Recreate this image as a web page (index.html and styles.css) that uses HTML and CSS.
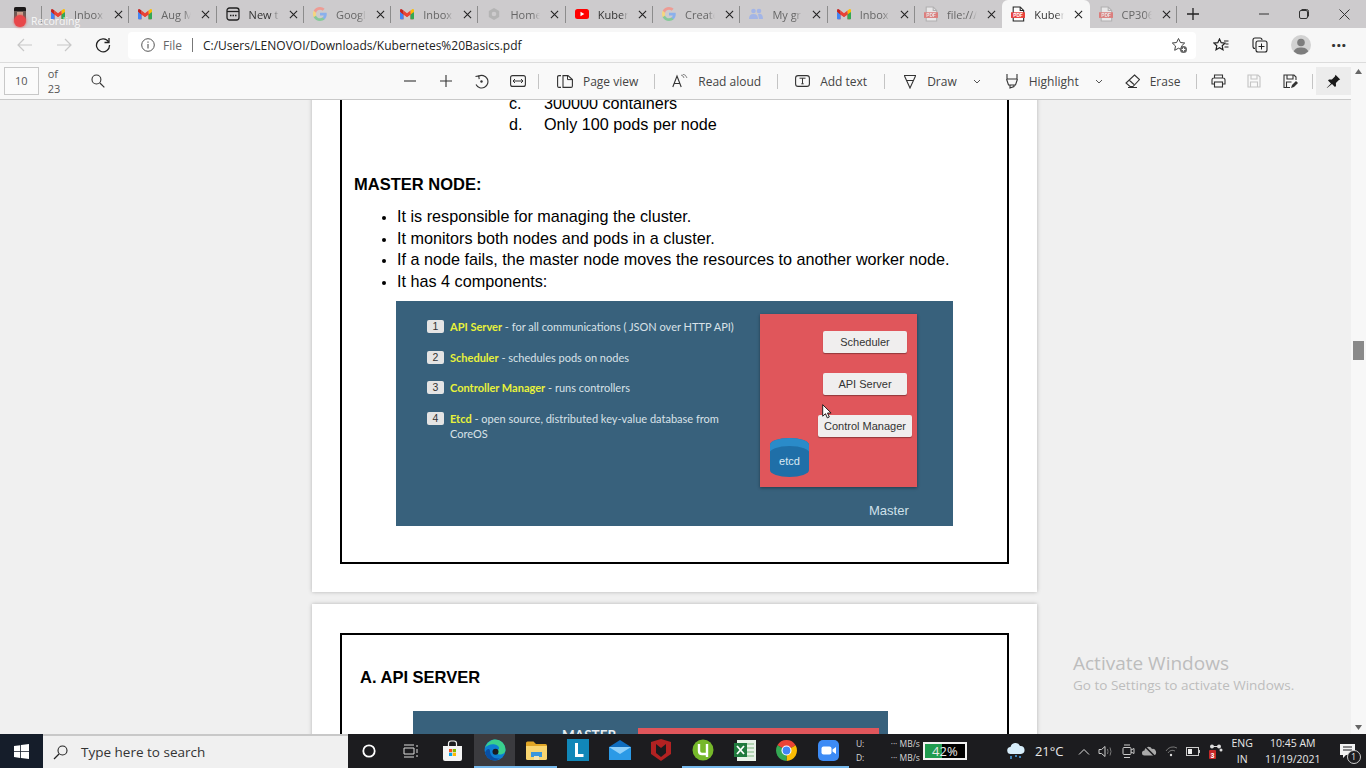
FILE: index.html
```html
<!DOCTYPE html>
<html>
<head>
  <title>Kubernetes Basics.pdf</title>
  <link rel="stylesheet" href="styles.css">
</head>
<body>

  <svg class="defs" width="0" height="0">
    <symbol id="gmail" viewBox="0 0 16 12">
      <path d="M1 12V3l7 5 7-5v9h-3V6.500L8 9.500 4 6.500V12z" fill="#ea4335"/>
      <path d="M1 12h3V6.500L0 3.500V11q0 1 1 1z" fill="#4285f4"/>
      <path d="M12 12h3q1 0 1-1V3.500l-4 3z" fill="#34a853"/>
      <path d="M12 6.500l4-3V2q0-2-2-1.500L12 2z" fill="#fbbc04"/>
      <path d="M4 6.500L8 9.500l4-3V2L8 5 4 2z" fill="#ea4335"/>
      <path d="M0 3.500l4 3V2L2 .500Q0 0 0 2z" fill="#c5221f"/>
    </symbol>
    <symbol id="google" viewBox="0 0 16 16">
      <path d="M15.700 8.200c0-.6-.1-1.100-.2-1.600H8v3h4.300c-.2 1-.8 1.800-1.600 2.400v2h2.600c1.500-1.400 2.400-3.400 2.400-5.800z" fill="#8ab0ec"/>
      <path d="M8 16c2.200 0 4-.7 5.300-1.900l-2.600-2c-.7.500-1.600.8-2.700.8-2.100 0-3.900-1.400-4.500-3.300H.8v2.100C2.100 14.300 4.800 16 8 16z" fill="#86c99a"/>
      <path d="M3.500 9.600c-.3-1-.3-2.100 0-3.100V4.400H.8c-1.100 2.200-1.100 5 0 7.200z" fill="#f5d67f"/>
      <path d="M8 3.200c1.200 0 2.200.4 3 1.200l2.300-2.300C11.900.8 10.100 0 8 0 4.800 0 2.100 1.800.8 4.400l2.700 2.100C4.100 4.600 5.900 3.200 8 3.200z" fill="#ee9c94"/>
    </symbol>
    <symbol id="pdf" viewBox="0 0 16 18">
      <path d="M2.500 1h8l4 4v12h-12z" fill="#fff" stroke="currentColor" stroke-width="1.200"/>
      <path d="M10.500 1v4h4" fill="none" stroke="currentColor" stroke-width="1.200"/>
      <rect x="0" y="7" width="16" height="6.500" fill="#e8413c"/>
      <text x="8" y="12.300" font-size="5.500" font-weight="700" text-anchor="middle" fill="#fff" font-family="Liberation Sans">PDF</text>
    </symbol>
    <symbol id="close" viewBox="0 0 10 10">
      <path d="M1 1l8 8M9 1l-8 8" stroke="#222" stroke-width="1.200" fill="none"/>
    </symbol>
    <symbol id="chev" viewBox="0 0 8 5">
      <path d="M1 1l3 3 3-3" stroke="#555" stroke-width="1" fill="none"/>
    </symbol>
  </svg>

  <!-- Tabs -->
  <div class="tabstrip">
    <div class="tab-first">
      <svg width="14" height="16" viewBox="0 0 14 16"><rect x="1" y="1" width="12" height="14" rx="2" fill="#6b5b55"/><path d="M1 5V3q0-2 2-2h8q2 0 2 2v2z" fill="#1c1a1a"/><rect x="4" y="6" width="6" height="6" fill="#c9a38e"/></svg>
    </div>
    <div class="tab"><svg class="fav"><use href="#gmail"/></svg><span class="tab-name">Inbox</span><svg class="tab-x"><use href="#close"/></svg></div>
    <div class="tab"><svg class="fav"><use href="#gmail"/></svg><span class="tab-name">Aug M</span><svg class="tab-x"><use href="#close"/></svg></div>
    <div class="tab">
      <svg class="fav" viewBox="0 0 14 14"><rect x="1" y="1" width="12" height="12" rx="2.500" fill="none" stroke="#222" stroke-width="1.300"/><path d="M1 4.500h12" stroke="#222" stroke-width="1.300"/><path d="M4 8.500h1.500M6.500 8.500H8M9 8.500h1.500" stroke="#222" stroke-width="1.300"/></svg>
      <span class="tab-name tab-dark">New t</span><svg class="tab-x"><use href="#close"/></svg>
    </div>
    <div class="tab"><svg class="fav"><use href="#google"/></svg><span class="tab-name">Googl</span><svg class="tab-x"><use href="#close"/></svg></div>
    <div class="tab"><svg class="fav"><use href="#gmail"/></svg><span class="tab-name">Inbox</span><svg class="tab-x"><use href="#close"/></svg></div>
    <div class="tab">
      <svg class="fav" viewBox="0 0 14 14"><path d="M7 1l5.200 3v6L7 13l-5.200-3V4z" fill="#b4b4b4"/><circle cx="7" cy="7" r="2.300" fill="#cdcbcd"/></svg>
      <span class="tab-name">Home</span><svg class="tab-x"><use href="#close"/></svg>
    </div>
    <div class="tab">
      <svg class="fav" viewBox="0 0 14 10"><rect width="14" height="10" rx="2.500" fill="#f00"/><path d="M5.500 2.800v4.400L9.300 5z" fill="#fff"/></svg>
      <span class="tab-name tab-dark">Kuber</span><svg class="tab-x"><use href="#close"/></svg>
    </div>
    <div class="tab"><svg class="fav"><use href="#google"/></svg><span class="tab-name">Create</span><svg class="tab-x"><use href="#close"/></svg></div>
    <div class="tab">
      <svg class="fav" viewBox="0 0 14 12"><circle cx="4.500" cy="3" r="2.300" fill="#a3b5e6"/><circle cx="10" cy="3" r="2.300" fill="#a3b5e6"/><path d="M0 11q0-5 4.500-5T9 11zM9 6q5-1 5 5h-4z" fill="#a3b5e6"/></svg>
      <span class="tab-name">My gr</span><svg class="tab-x"><use href="#close"/></svg>
    </div>
    <div class="tab"><svg class="fav"><use href="#gmail"/></svg><span class="tab-name">Inbox</span><svg class="tab-x"><use href="#close"/></svg></div>
    <div class="tab tab-before-active"><svg class="fav-pdf fav-dim"><use href="#pdf"/></svg><span class="tab-name">file:///</span><svg class="tab-x"><use href="#close"/></svg></div>
    <div class="tab tab-active"><svg class="fav-pdf"><use href="#pdf"/></svg><span class="tab-name tab-dark">Kuber</span><svg class="tab-x"><use href="#close"/></svg></div>
    <div class="tab"><svg class="fav-pdf fav-dim"><use href="#pdf"/></svg><span class="tab-name">CP306</span><svg class="tab-x"><use href="#close"/></svg></div>
    <svg class="tab-plus" width="14" height="14" viewBox="0 0 14 14"><path d="M7 1v12M1 7h12" stroke="#222" stroke-width="1.300"/></svg>
    <div class="win-controls">
      <svg width="10" height="10" viewBox="0 0 10 10"><path d="M0 5h10" stroke="#333"/></svg>
      <svg width="10" height="10" viewBox="0 0 10 10"><rect x=".500" y="1.500" width="8" height="8" rx="1.500" fill="none" stroke="#333"/><path d="M2.500 .500h5q2 0 2 2v5" fill="none" stroke="#333"/></svg>
      <svg width="11" height="11" viewBox="0 0 11 11"><path d="M.500 .500l10 10M10.500 .500l-10 10" stroke="#333"/></svg>
    </div>
  </div>
  <div class="rec-badge"><span class="rec-dot"></span>Recording</div>

  <!-- Address row -->
  <div class="addr-row">
    <svg class="nav-ico" width="16" height="14" viewBox="0 0 16 14"><path d="M15 7H1.500M7 1L1 7l6 6" fill="none" stroke="#c8c8c8" stroke-width="1.200"/></svg>
    <svg class="nav-ico" width="16" height="14" viewBox="0 0 16 14"><path d="M1 7h13.500M9 1l6 6-6 6" fill="none" stroke="#c8c8c8" stroke-width="1.200"/></svg>
    <svg class="nav-ico" width="16" height="16" viewBox="0 0 16 16"><path d="M13.600 5A6.500 6.500 0 1 0 14.500 8" fill="none" stroke="#222" stroke-width="1.300"/><path d="M14 1v4.500H9.500" fill="none" stroke="#222" stroke-width="1.300"/></svg>
    <div class="addr-box">
      <svg width="14" height="14" viewBox="0 0 14 14"><circle cx="7" cy="7" r="6.300" fill="none" stroke="#555"/><path d="M7 6v4.500M7 3.500v1.200" stroke="#555" stroke-width="1.100"/></svg>
      <span class="addr-file">File</span>
      <span class="addr-sep"></span>
      <span class="addr-url">C:/Users/LENOVOI/Downloads/Kubernetes%20Basics.pdf</span>
      <svg class="addr-fav" width="17" height="17" viewBox="0 0 17 17"><path d="M7.500 1.500l1.900 4 4.300.5-3.200 3 .8 4.300-3.800-2.100-3.800 2.100.8-4.300-3.200-3 4.300-.5z" fill="none" stroke="#444"/><circle cx="12.500" cy="12.500" r="3.500" fill="#666"/><path d="M12.500 10.700v3.600M10.700 12.500h3.600" stroke="#fff"/></svg>
    </div>
    <svg class="bar-ico" width="16" height="15" viewBox="0 0 16 15"><path d="M6.500 1l1.700 3.700 3.800.4-2.800 2.700.8 4-3.500-2-3.500 2 .8-4L1 5.100l3.800-.4z" fill="none" stroke="#222" stroke-width="1.200"/><path d="M11 3h4.500M12.500 6h3M11.500 9h4" stroke="#222"/></svg>
    <svg class="bar-ico" width="16" height="16" viewBox="0 0 16 16"><path d="M3 11.500Q1 11.500 1 9.500V3q0-2 2-2h5q2 0 2 2" fill="none" stroke="#222" stroke-width="1.100"/><rect x="4" y="4" width="11" height="11" rx="2" fill="#f7f7f7" stroke="#222" stroke-width="1.100"/><path d="M9.500 6.500v6M6.500 9.500h6" stroke="#222"/></svg>
    <svg class="avatar" width="20" height="20" viewBox="0 0 20 20"><circle cx="10" cy="10" r="10" fill="#d2d2d2"/><circle cx="10" cy="7.500" r="3.800" fill="#7d7d7d"/><path d="M2.800 16.500C4 13 7 12.500 10 12.500s6 .5 7.200 4A10 10 0 0 1 2.800 16.500z" fill="#7d7d7d"/></svg>
    <span class="more-dots">···</span>
  </div>

  <!-- Viewer with PDF toolbar and scrollbar -->
  <div class="app-row">
    <div class="viewer-col">
      <div class="pdf-bar">
        <div class="page-input">10</div>
        <span class="page-of">of 23</span>
        <svg class="search-ico" width="14" height="14" viewBox="0 0 14 14"><circle cx="5.500" cy="5.500" r="4.500" fill="none" stroke="#333" stroke-width="1.100"/><path d="M9 9l4.500 4.500" stroke="#333" stroke-width="1.200"/></svg>

        <div class="tool tool-first"><svg width="14" height="14" viewBox="0 0 14 14"><path d="M1 7h12" stroke="#333" stroke-width="1.100"/></svg></div>
        <div class="tool"><svg width="14" height="14" viewBox="0 0 14 14"><path d="M1 7h12M7 1v12" stroke="#333" stroke-width="1.100"/></svg></div>
        <div class="tool"><svg width="15" height="15" viewBox="0 0 15 15"><path d="M4.500 2.200A6.300 6.300 0 1 1 2 10.500" fill="none" stroke="#333" stroke-width="1.100"/><path d="M1.500 2.500l3.200-.5.500 3.200" fill="none" stroke="#333" stroke-width="1.100"/><circle cx="7.500" cy="7.500" r="1.200" fill="#333"/></svg></div>
        <div class="tool"><svg width="16" height="12" viewBox="0 0 16 12"><rect x=".600" y=".600" width="14.800" height="10.800" rx="2" fill="none" stroke="#333" stroke-width="1.100"/><path d="M3 6h10M5 4L3 6l2 2M11 4l2 2-2 2" fill="none" stroke="#333"/></svg></div>
        <span class="tool-sep tool-sep-a"></span>
        <div class="tool-text tool-page">
          <svg width="16" height="13" viewBox="0 0 16 13"><path d="M4 .600H2Q.600 .600 .600 2v9q0 1.400 1.400 1.400h2M6 .600h5l4.400 4v6.400q0 1.400-1.400 1.400H6z" fill="none" stroke="#333" stroke-width="1.100"/><path d="M10.500 .600v4h4.500" fill="none" stroke="#333"/></svg>
          Page view
        </div>
        <span class="tool-sep"></span>
        <div class="tool-text tool-read">
          <svg width="16" height="14" viewBox="0 0 16 14"><path d="M.800 13L5 2l4.200 11M2.300 9.500h5.400" fill="none" stroke="#333" stroke-width="1.100"/><path d="M9 1q2.500.5 3 3M10.500 0Q14 .5 15 4" fill="none" stroke="#777" stroke-width=".9"/></svg>
          Read aloud
        </div>
        <span class="tool-sep"></span>
        <div class="tool-text tool-add">
          <svg width="15" height="12" viewBox="0 0 15 12"><rect x=".600" y=".600" width="13.800" height="10.800" rx="2.500" fill="none" stroke="#333" stroke-width="1.100"/><path d="M4.500 3.200h6M7.500 3.200v5.600M6.300 8.800h2.400" fill="none" stroke="#333"/></svg>
          Add text
        </div>
        <span class="tool-sep"></span>
        <div class="tool-text tool-draw">
          <svg width="14" height="15" viewBox="0 0 14 15"><path d="M1 1.500h12M1.500 2l5.500 12L12.500 2M3.500 6.500h7" fill="none" stroke="#333" stroke-width="1.100"/></svg>
          Draw
          <svg class="tool-chev"><use href="#chev"/></svg>
        </div>
        <div class="tool-text tool-high">
          <svg width="14" height="16" viewBox="0 0 14 16"><path d="M2 1v5h10V1M1.500 6l2 6h7l2-6M5 12v3l4-1.500V12" fill="none" stroke="#333" stroke-width="1.100"/></svg>
          Highlight
          <svg class="tool-chev"><use href="#chev"/></svg>
        </div>
        <div class="tool-text tool-erase">
          <svg width="15" height="14" viewBox="0 0 15 14"><path d="M9.500 1l5 4.500L8 12.500H5L1 9zM4 6l5 4.500M3 13.500h9" fill="none" stroke="#333" stroke-width="1.100"/></svg>
          Erase
        </div>
        <span class="tool-sep"></span>
        <div class="tool tool-print"><svg width="15" height="14" viewBox="0 0 15 14"><path d="M3.500 4V1h8v3M3.500 10H1V6q0-2 2-2h9q2 0 2 2v4h-2.500" fill="none" stroke="#333" stroke-width="1.100"/><rect x="3.500" y="8" width="8" height="5" fill="none" stroke="#333" stroke-width="1.100"/></svg></div>
        <div class="tool"><svg width="14" height="14" viewBox="0 0 14 14"><path d="M1 1h10l2 2v10H1zM4 1v4h6V1M3.500 13V8h7v5" fill="none" stroke="#c4c4c4" stroke-width="1.100"/></svg></div>
        <div class="tool"><svg width="15" height="15" viewBox="0 0 15 15"><path d="M7 13.500H1V1h10l2 2v3M4 1v4h6V1M3.500 13V8h5" fill="none" stroke="#333" stroke-width="1.100"/><path d="M8 14l1-3 4-4 2 2-4 4z" fill="#333"/></svg></div>
        <span class="tool-sep tool-sep-b"></span>
        <div class="pin-btn"><svg width="15" height="15" viewBox="0 0 15 15"><path d="M9.500 .800l4.700 4.700-1.300.6-3 3 .1 2.900-1 1-3-3L1 14l-.2-.2L5 9.500l-3-3 1-1 2.900.1 3-3z" fill="#1a1a1a"/></svg></div>
      </div>

      <div class="viewer">
        <div class="page page-top">
          <div class="frame">
            <ol class="answers">
              <li><span class="answer-key">b.</span>150000 pods</li>
              <li><span class="answer-key">c.</span>300000 containers</li>
              <li><span class="answer-key">d.</span>Only 100 pods per node</li>
            </ol>
            <h3 class="doc-head">MASTER NODE:</h3>
            <ul class="bullets">
              <li>It is responsible for managing the cluster.</li>
              <li>It monitors both nodes and pods in a cluster.</li>
              <li>If a node fails, the master node moves the resources to another worker node.</li>
              <li>It has 4 components:</li>
            </ul>
            <div class="slide">
              <div class="slide-list">
                <div class="slide-row"><span class="num">1</span><p><b>API Server</b> - for all communications ( JSON over HTTP API)</p></div>
                <div class="slide-row"><span class="num">2</span><p><b>Scheduler</b> - schedules pods on nodes</p></div>
                <div class="slide-row"><span class="num">3</span><p><b>Controller Manager</b> - runs controllers</p></div>
                <div class="slide-row"><span class="num">4</span><p><b>Etcd</b> - open source, distributed key-value database from<br>CoreOS</p></div>
              </div>
              <div class="master-box">
                <div class="comp">Scheduler</div>
                <div class="comp">API Server</div>
                <div class="comp comp-wide">Control Manager</div>
                <div class="etcd">etcd</div>
                <svg class="mouse" width="10" height="15" viewBox="0 0 10 15"><path d="M.700 .700v11.500l2.800-2.500 1.800 4.200 2-.9-1.800-4h3.600z" fill="#fff" stroke="#111" stroke-width=".9"/></svg>
              </div>
              <span class="master-label">Master</span>
            </div>
          </div>
        </div>

        <div class="page page-next">
          <div class="frame frame-next">
            <h3 class="doc-head doc-head-api">A. API SERVER</h3>
            <div class="slide-two">
              <span class="master-caps">MASTER</span>
              <div class="master-strip"></div>
            </div>
          </div>
        </div>

        <div class="activate">
          <div class="activate-big">Activate Windows</div>
          <div class="activate-small">Go to Settings to activate Windows.</div>
        </div>
      </div>
    </div>

    <div class="scrollbar">
      <svg width="7" height="5" viewBox="0 0 7 5"><path d="M3.500 0L7 5H0z" fill="#666"/></svg>
      <div class="thumb"></div>
      <svg width="7" height="5" viewBox="0 0 7 5"><path d="M3.500 5L7 0H0z" fill="#666"/></svg>
    </div>
  </div>

  <!-- Taskbar -->
  <div class="taskbar">
    <div class="start">
      <svg width="15" height="15" viewBox="0 0 15 15"><path d="M0 2.100l6.200-.9v6H0zM7 1.100L15 0v7.200H7zM0 8h6.200v6L0 13.100zM7 8h8v7l-8-1.100z" fill="#fff"/></svg>
    </div>
    <div class="search">
      <svg width="15" height="15" viewBox="0 0 15 15"><circle cx="9.500" cy="5.500" r="4.500" fill="none" stroke="#222" stroke-width="1.100"/><path d="M6 9l-5 5" stroke="#222" stroke-width="1.300"/></svg>
      <span>Type here to search</span>
    </div>
    <div class="task-sys">
      <svg width="14" height="14" viewBox="0 0 14 14"><circle cx="7" cy="7" r="5.700" fill="none" stroke="#fff" stroke-width="1.800"/></svg>
    </div>
    <div class="task-sys">
      <svg width="16" height="14" viewBox="0 0 16 14"><path d="M1 1h10M1 13h10M1 4h10v6H1zM14 1v2M14 5v4M14 11v2" fill="none" stroke="#ddd"/></svg>
    </div>

    <div class="task-app">
      <svg width="21" height="21" viewBox="0 0 21 21"><path d="M1 6h19v13q0 2-2 2H3q-2 0-2-2z" fill="#f4f4f4"/><path d="M6.500 6V3.500Q6.500 1 9 1h3q2.500 0 2.500 2.500V6" fill="none" stroke="#f4f4f4" stroke-width="1.200"/><rect x="7" y="9" width="3.200" height="3.200" fill="#f25022"/><rect x="10.800" y="9" width="3.200" height="3.200" fill="#7fba00"/><rect x="7" y="12.800" width="3.200" height="3.200" fill="#00a4ef"/><rect x="10.800" y="12.800" width="3.200" height="3.200" fill="#ffb900"/></svg>
    </div>
    <div class="task-app task-active on">
      <svg width="22" height="22" viewBox="0 0 22 22"><circle cx="11" cy="11" r="10.500" fill="#0d7ed1"/><path d="M1 9C3 2 9 .500 11 .500 17 .500 21.500 5 21.500 11c0 3-3 4.500-5.500 4.500-3 0-4.500-1.500-4-3 .5-2 3.500-1 3-4C14.500 5 5 3 1 9z" fill="#3ad08d"/><path d="M6 12c0 5 5 9 10 7-2 2-4 2.500-5 2.500-5 0-9-3-10-8C3 9 6 9 6 12z" fill="#0a4fa3"/><circle cx="11.500" cy="12.800" r="3" fill="#1b1b1e"/></svg>
    </div>
    <div class="task-app on">
      <svg width="21" height="19" viewBox="0 0 21 19"><path d="M0 2q0-1.500 1.500-1.500h6L10 3h9.500q1.500 0 1.500 1.500V6H0z" fill="#e0a526"/><path d="M0 5h21v12.500q0 1.500-1.500 1.500h-18Q0 19 0 17.500z" fill="#f9d570"/><rect x="5" y="11" width="11" height="5" fill="#3a96dd"/><rect x="8" y="15" width="5" height="4" fill="#f2e3b3"/></svg>
    </div>
    <div class="task-app">
      <svg width="22" height="22" viewBox="0 0 22 22"><rect width="22" height="22" fill="#1187b8"/><path d="M8 4h3v11h5.500v3H8z" fill="#fff"/></svg>
    </div>
    <div class="task-app">
      <svg width="22" height="20" viewBox="0 0 22 20"><path d="M0 7L11 0l11 7v1H0z" fill="#0f6cbd"/><rect y="7" width="22" height="13" fill="#2b9ae6"/><path d="M0 7l11 7 11-7" fill="#8fd0fa"/></svg>
    </div>
    <div class="task-app">
      <svg width="20" height="22" viewBox="0 0 20 22"><path d="M0 3l10-3 10 3v12l-10 7L0 15z" fill="#b22222"/><path d="M5 5l5 4 5-4v9l-5 4-5-4z" fill="#1b1b1e"/></svg>
    </div>
    <div class="task-app on">
      <svg width="22" height="22" viewBox="0 0 22 22"><circle cx="11" cy="11" r="10.500" fill="#76b82a"/><path d="M7 5v7q0 3 3 3h5V5M15 15v3" fill="none" stroke="#fff" stroke-width="2.400"/></svg>
    </div>
    <div class="task-app on">
      <svg width="22" height="21" viewBox="0 0 22 21"><rect x="3" width="19" height="21" fill="#e8f2e8"/><path d="M12 4h8M12 8h8M12 12h8M12 16h8" stroke="#7cb57c"/><rect y="3" width="13" height="14" fill="#1f7a3d"/><path d="M3 6l7 8M10 6l-7 8" stroke="#fff" stroke-width="1.800"/></svg>
    </div>
    <div class="task-app on">
      <svg width="21" height="21" viewBox="0 0 21 21"><path d="M10.500 10.500L1.400 5.300A10.500 10.500 0 0 1 19.600 5.300z" fill="#ea4335"/><path d="M10.500 10.500L19.600 5.300A10.500 10.500 0 0 1 10.500 21z" fill="#fbbc04"/><path d="M10.500 10.500V21A10.500 10.500 0 0 1 1.400 5.300z" fill="#34a853"/><circle cx="10.500" cy="10.500" r="5" fill="#fff"/><circle cx="10.500" cy="10.500" r="3.900" fill="#4285f4"/></svg>
    </div>
    <div class="task-app on">
      <svg width="21" height="21" viewBox="0 0 21 21"><rect width="21" height="21" rx="5" fill="#3d8bf5"/><rect x="3.500" y="6.500" width="10" height="8" rx="2" fill="#fff"/><path d="M14.500 9.500l3.500-2.500v7l-3.500-2.500z" fill="#fff"/></svg>
    </div>

    <div class="net-meter">
      <div class="net-row"><span>U:</span><span>··· MB/s</span></div>
      <div class="net-row"><span>D:</span><span>··· MB/s</span></div>
    </div>
    <div class="battery"><div class="battery-fill"></div><span class="battery-text">42%</span></div>

    <svg class="weather" width="20" height="20" viewBox="0 0 20 20"><path d="M5 13a3.500 3.500 0 0 1-.5-7A5 5 0 0 1 14 5a4 4 0 0 1 1 8z" fill="#d8eefb"/><path d="M5 15v3M10 14v2M14 15v2" stroke="#4aa3e8" stroke-width="1.500"/></svg>
    <span class="temp">21°C</span>
    <svg class="tray tray-up" width="12" height="7" viewBox="0 0 12 7"><path d="M1 6.500l5-5 5 5" fill="none" stroke="#ddd"/></svg>
    <svg class="tray tray-vol" width="15" height="13" viewBox="0 0 15 13"><path d="M1 4.500h2.500L7 1.500v10l-3.500-3H1z" fill="none" stroke="#ccc"/><path d="M9.500 4q1 2.500 0 5M12 2.500q2 4 0 8" fill="none" stroke="#777"/></svg>
    <svg class="tray tray-meet" width="13" height="15" viewBox="0 0 13 15"><rect x="1" y="3.500" width="8" height="7" rx="1" fill="none" stroke="#ccc"/><path d="M9 6l3-1.500v5L9 8M2 1h6M2 13.500h6" fill="none" stroke="#ccc"/></svg>
    <svg class="tray tray-drive" width="16" height="12" viewBox="0 0 16 12"><path d="M3.500 10.500a2.500 2.500 0 0 1 0-5A4 4 0 0 1 11 4a3.300 3.300 0 0 1 1.500 6.500z" fill="#aaa"/><path d="M3 .500l11 11" stroke="#1b1b1e" stroke-width="1.500"/></svg>
    <svg class="tray tray-wifi" width="13" height="12" viewBox="0 0 13 12"><path d="M1 6a8 8 0 0 1 11-3M3 8a5 5 0 0 1 7-2" fill="none" stroke="#777"/><circle cx="6" cy="10" r="1.200" fill="#ddd"/></svg>
    <svg class="tray tray-batt" width="14" height="9" viewBox="0 0 14 9"><rect x=".500" y=".500" width="12" height="8" fill="none" stroke="#ccc"/><rect x="2" y="2" width="4" height="5" fill="#eee"/><rect x="13" y="3" width="1" height="3" fill="#ccc"/></svg>
    <svg class="tray tray-app" width="14" height="15" viewBox="0 0 14 15"><circle cx="3" cy="2.500" r="2" fill="#ddd"/><circle cx="10" cy="2.500" r="2" fill="#ddd"/><circle cx="12" cy="6" r="1.500" fill="#ddd"/><path d="M3 2.500h7" stroke="#ddd"/><rect y="6" width="7" height="9" rx="1" fill="#c62828"/><text x="3.500" y="13.500" font-size="7" font-weight="700" text-anchor="middle" fill="#fff" font-family="Liberation Sans">3</text></svg>
    <div class="lang"><span>ENG</span><span>IN</span></div>
    <div class="clock"><span>10:45 AM</span><span>11/19/2021</span></div>
    <div class="notify">
      <svg width="15" height="14" viewBox="0 0 15 14"><path d="M0 0h15v11H6l-3 3v-3H0z" fill="#f2f2f2"/><path d="M3 3h9M3 6h9" stroke="#1b1b1e"/></svg>
      <span class="notify-num">1</span>
    </div>
  </div>

</body>
</html>
```

FILE: styles.css
```css
* {
  box-sizing: border-box;
}

html, body {
  margin: 0;
  height: 768px;
  overflow: hidden;
}

body {
  position: relative;
  display: flex;
  flex-direction: column;
  font-family: "Open Sans", "Liberation Sans", sans-serif;
  color: #333;
  background: #f0f0f0;
}

.defs {
  position: absolute;
}

/* tabs */
.tabstrip {
  height: 28px;
  flex: none;
  display: flex;
  align-items: center;
  background: #cdcbcd;
}

.tab-first {
  width: 42px;
  height: 17px;
  display: flex;
  justify-content: flex-end;
  padding-right: 14px;
  align-items: center;
  border-right: 1px solid #8c8c8c;
}

.tab {
  width: 87.300px;
  height: 17px;
  flex: none;
  display: flex;
  align-items: center;
  padding-left: 9px;
  border-right: 1px solid #8c8c8c;
}

.tab-before-active {
  border-right: 0;
}

.tab-active {
  height: 28px;
  background: #f7f7f7;
  border-right: 0;
  border-radius: 6px 6px 0 0;
}

.fav {
  width: 14px;
  height: 14px;
  flex: none;
}

.fav-pdf {
  width: 14px;
  height: 16px;
  flex: none;
  color: #222;
}

.fav-dim {
  color: #999;
  opacity: .55;
}

.tab-name {
  width: 30px;
  margin-left: 9px;
  overflow: hidden;
  white-space: nowrap;
  font-size: 11px;
  color: #666;
  -webkit-mask-image: linear-gradient(to right, #000 75%, transparent);
  mask-image: linear-gradient(to right, #000 75%, transparent);
}

.tab-dark {
  color: #333;
}

.tab-x {
  width: 9px;
  height: 9px;
  margin-left: 10px;
  flex: none;
}

.tab-plus {
  margin-left: 9px;
}

.win-controls {
  display: flex;
  align-items: center;
  gap: 30px;
  margin-left: auto;
  margin-right: 16px;
}

.rec-badge {
  position: absolute;
  left: 14px;
  top: 14px;
  display: flex;
  align-items: center;
  gap: 5px;
  font-size: 10.500px;
  color: rgba(255, 255, 255, .85);
}

.rec-dot {
  width: 12px;
  height: 12px;
  border-radius: 50%;
  background: #e8474a;
  box-shadow: 0 0 3px #e8474a;
}

/* address row */
.addr-row {
  height: 35px;
  flex: none;
  display: flex;
  align-items: center;
  padding-left: 17px;
  background: #f7f7f7;
  border-bottom: 1px solid #dcdcdc;
}

.nav-ico {
  flex: none;
  margin-right: 23px;
}

.nav-ico:nth-child(3) {
  margin-left: 0;
  margin-right: 17px;
}

.addr-box {
  width: 1068px;
  height: 27px;
  display: flex;
  align-items: center;
  padding-left: 13px;
  background: #fff;
  border-radius: 4px;
}

.addr-file {
  margin-left: 8px;
  font-size: 12px;
  color: #666;
}

.addr-sep {
  width: 1px;
  height: 14px;
  margin: 0 10px;
  background: #777;
}

.addr-url {
  font-size: 12px;
  color: #222;
}

.addr-fav {
  margin-left: auto;
  margin-right: 8px;
}

.bar-ico {
  margin-left: 17px;
}

.bar-ico + .bar-ico {
  margin-left: 23px;
}

.avatar {
  margin-left: 23px;
}

.more-dots {
  margin-left: 20px;
  font-size: 18px;
  font-weight: 700;
  color: #333;
}

/* viewer */
.app-row {
  flex: 1;
  min-height: 0;
  display: flex;
}

.viewer-col {
  flex: 1;
  min-width: 0;
  display: flex;
  flex-direction: column;
}

.pdf-bar {
  height: 37px;
  flex: none;
  display: flex;
  align-items: center;
  padding-left: 4px;
  background: #f9f9f9;
  border-bottom: 1px solid #c9c9c9;
  font-size: 12px;
  color: #444;
}

.page-input {
  width: 35px;
  height: 28px;
  line-height: 26px;
  text-align: center;
  font-size: 11px;
  color: #555;
  border: 1px solid #c8c8c8;
  background: #fbfbfb;
}

.page-of {
  margin-left: 9px;
  font-size: 11px;
  color: #555;
}

.search-ico {
  margin-left: 18px;
}

.tool {
  width: 36px;
  height: 28px;
  flex: none;
  display: flex;
  align-items: center;
  justify-content: center;
}

.tool-first {
  margin-left: 287px;
}

.tool-sep {
  width: 1px;
  height: 15px;
  flex: none;
  background: #c4c4c4;
}

.tool-sep-a {
  margin-left: 2px;
}

.tool-text {
  display: flex;
  align-items: center;
  flex: none;
  white-space: nowrap;
}

.tool-text > svg:first-child {
  margin-right: 10px;
}

.tool-page {
  margin-left: 18px;
  margin-right: 16px;
}

.tool-read {
  margin-left: 17px;
  margin-right: 16px;
}

.tool-add {
  margin-left: 17px;
  margin-right: 17px;
}

.tool-draw {
  margin-left: 18px;
}

.tool-chev {
  width: 8px;
  height: 5px;
  margin-left: 16px;
}

.tool-high {
  margin-left: 24px;
}

.tool-erase {
  margin-left: 22px;
  margin-right: 16px;
}

.tool-print {
  margin-left: 3px;
}

.tool-sep-b {
  margin-left: 4px;
}

.pin-btn {
  width: 35px;
  height: 28px;
  margin-left: 3px;
  display: flex;
  align-items: center;
  justify-content: center;
  background: #ececec;
}

.viewer {
  position: relative;
  flex: 1;
  min-height: 0;
  overflow: hidden;
  background: #f0f0f0;
}

.page {
  width: 725px;
  margin-left: 312px;
  background: #fff;
  box-shadow: 0 0 4px rgba(0, 0, 0, .25);
}

.page-top {
  margin-top: -60px;
  height: 552px;
  padding: 10px 28px 0;
}

.page-next {
  margin-top: 12px;
  height: 300px;
  padding: 29px 28px 0;
}

.frame {
  border: 2px solid #000;
  height: 514px;
  font-family: "Liberation Sans", Arial, sans-serif;
  font-size: 16.200px;
  line-height: 21.500px;
  color: #000;
}

.frame-next {
  height: 260px;
}

.answers {
  list-style: none;
  margin: 0;
  padding: 19px 0 0 167px;
}

.answer-key {
  display: inline-block;
  width: 35px;
}

.doc-head {
  margin: 38px 0 0 12px;
  font-size: 16.500px;
  font-weight: 700;
}

.doc-head-api {
  margin: 32px 0 0 18px;
}

.bullets {
  margin: 11px 0 0;
  padding-left: 55px;
}

.bullets li::marker {
  font-size: 14px;
}

/* slide picture in the pdf */
.slide {
  position: relative;
  width: 557px;
  height: 225px;
  margin: 9px 0 0 54px;
  display: flex;
  background: #38617c;
  font-family: Lato, "Liberation Sans", sans-serif;
  font-size: 11px;
  line-height: 15px;
  color: #d8e2e8;
}

.slide-list {
  width: 364px;
  padding: 18px 0 0 31px;
  display: flex;
  flex-direction: column;
  gap: 15.500px;
}

.slide-row {
  display: flex;
  gap: 6px;
}

.slide-row p {
  margin: 0;
  white-space: nowrap;
}

.slide-row b {
  color: #e8f23a;
  font-weight: 700;
}

.num {
  width: 17px;
  height: 13px;
  margin-top: 1px;
  flex: none;
  text-align: center;
  line-height: 13px;
  font-family: "Liberation Sans", sans-serif;
  font-size: 10.500px;
  color: #333;
  background: #e4e4e4;
  border-radius: 2px;
}

.master-box {
  position: relative;
  width: 157px;
  height: 173px;
  margin-top: 13px;
  display: flex;
  flex-direction: column;
  align-items: flex-end;
  gap: 20px;
  padding: 17px 10px 0 0;
  background: #e0565b;
  box-shadow: 0 1px 3px rgba(0, 0, 0, .4);
}

.comp {
  width: 84px;
  height: 22px;
  line-height: 22px;
  text-align: center;
  font-family: "Liberation Sans", sans-serif;
  font-size: 11px;
  color: #333;
  background: #f0eeee;
  border-radius: 2px;
  box-shadow: 0 1px 1px rgba(0, 0, 0, .35);
}

.comp-wide {
  width: 94px;
  margin-right: -5px;
}

.etcd {
  position: absolute;
  left: 10px;
  top: 124px;
  width: 39px;
  height: 39px;
  line-height: 46px;
  text-align: center;
  font-family: "Liberation Sans", sans-serif;
  font-size: 11px;
  color: #dceaf3;
  background: #1f6fa8;
  border-radius: 50% / 7px;
  box-shadow: inset 0 9px 0 -1px #2a8bc9;
}

.mouse {
  position: absolute;
  left: 62px;
  top: 90px;
}

.master-label {
  position: absolute;
  left: 473px;
  top: 202px;
  font-family: "Liberation Sans", sans-serif;
  font-size: 13px;
  color: #cfe0ea;
}

.slide-two {
  position: relative;
  width: 475px;
  height: 60px;
  margin: 22px 0 0 71px;
  background: #38617c;
}

.master-caps {
  position: absolute;
  left: 149px;
  top: 16px;
  font-family: Lato, sans-serif;
  font-size: 13.500px;
  line-height: 16px;
  font-weight: 700;
  color: #e8eef2;
}

.master-strip {
  position: absolute;
  left: 225px;
  top: 17px;
  width: 241px;
  height: 40px;
  background: #e0565b;
}

.activate {
  position: absolute;
  left: 1073px;
  top: 551px;
  color: #bdbdbd;
}

.activate-big {
  font-size: 19px;
  line-height: 24px;
}

.activate-small {
  font-size: 13.500px;
  line-height: 20px;
}

.scrollbar {
  width: 15px;
  flex: none;
  display: flex;
  flex-direction: column;
  align-items: center;
  padding: 6px 0 4px;
  background: #f7f7f7;
}

.thumb {
  width: 11px;
  height: 19px;
  margin-top: 267px;
  margin-bottom: auto;
  background: #8a8a8a;
}

/* taskbar */
.taskbar {
  height: 34px;
  flex: none;
  display: flex;
  align-items: center;
  background: #1c1c1f;
  color: #e8e8e8;
}

.start {
  width: 43px;
  height: 34px;
  display: flex;
  align-items: center;
  justify-content: center;
  background: #151d2a;
}

.search {
  width: 305px;
  height: 34px;
  display: flex;
  align-items: center;
  gap: 13px;
  padding-left: 10px;
  font-size: 13.500px;
  color: #333;
  background: #f0f0f0;
  border-top: 2px solid #c8c8c8;
}

.task-sys {
  width: 42px;
  display: flex;
  justify-content: center;
}

.task-app {
  width: 41.700px;
  height: 34px;
  flex: none;
  display: flex;
  align-items: center;
  justify-content: center;
  border-bottom: 2px solid transparent;
}

.task-app.on {
  border-bottom-color: #76b9ed;
}

.task-active {
  background: #3b3b3f;
}

.net-meter {
  width: 64px;
  margin-left: 7px;
  font-size: 8.500px;
  line-height: 14px;
  color: #d8d8d8;
}

.net-row {
  display: flex;
  justify-content: space-between;
}

.battery {
  position: relative;
  width: 44px;
  height: 18px;
  margin-left: 3px;
  background: #000;
  border: 2px solid #f2f2f2;
}

.battery-fill {
  width: 42%;
  height: 100%;
  background: #1f9b4f;
}

.battery-text {
  position: absolute;
  inset: 0;
  text-align: center;
  font-size: 13px;
  line-height: 14px;
}

.weather {
  margin-left: 39px;
}

.temp {
  margin-left: 9px;
  font-size: 13px;
}

.tray-up {
  margin-left: 14px;
}

.tray-vol {
  margin-left: 8px;
}

.tray-meet {
  margin-left: 9px;
}

.tray-drive {
  margin-left: 6px;
}

.tray-wifi {
  margin-left: 8px;
}

.tray-batt {
  margin-left: 8px;
}

.tray-app {
  margin-left: 9px;
}

.lang, .clock {
  display: flex;
  flex-direction: column;
  align-items: center;
  font-size: 10.500px;
  line-height: 16px;
  white-space: nowrap;
}

.lang {
  margin-left: 9px;
}

.clock {
  margin-left: 12px;
}

.notify {
  position: relative;
  margin-left: 19px;
  display: flex;
}

.notify-num {
  position: absolute;
  left: 7px;
  top: 6px;
  width: 14px;
  height: 14px;
  border: 1px solid #ccc;
  border-radius: 50%;
  line-height: 12px;
  text-align: center;
  font-size: 9px;
  background: #1c1c1f;
}
```
